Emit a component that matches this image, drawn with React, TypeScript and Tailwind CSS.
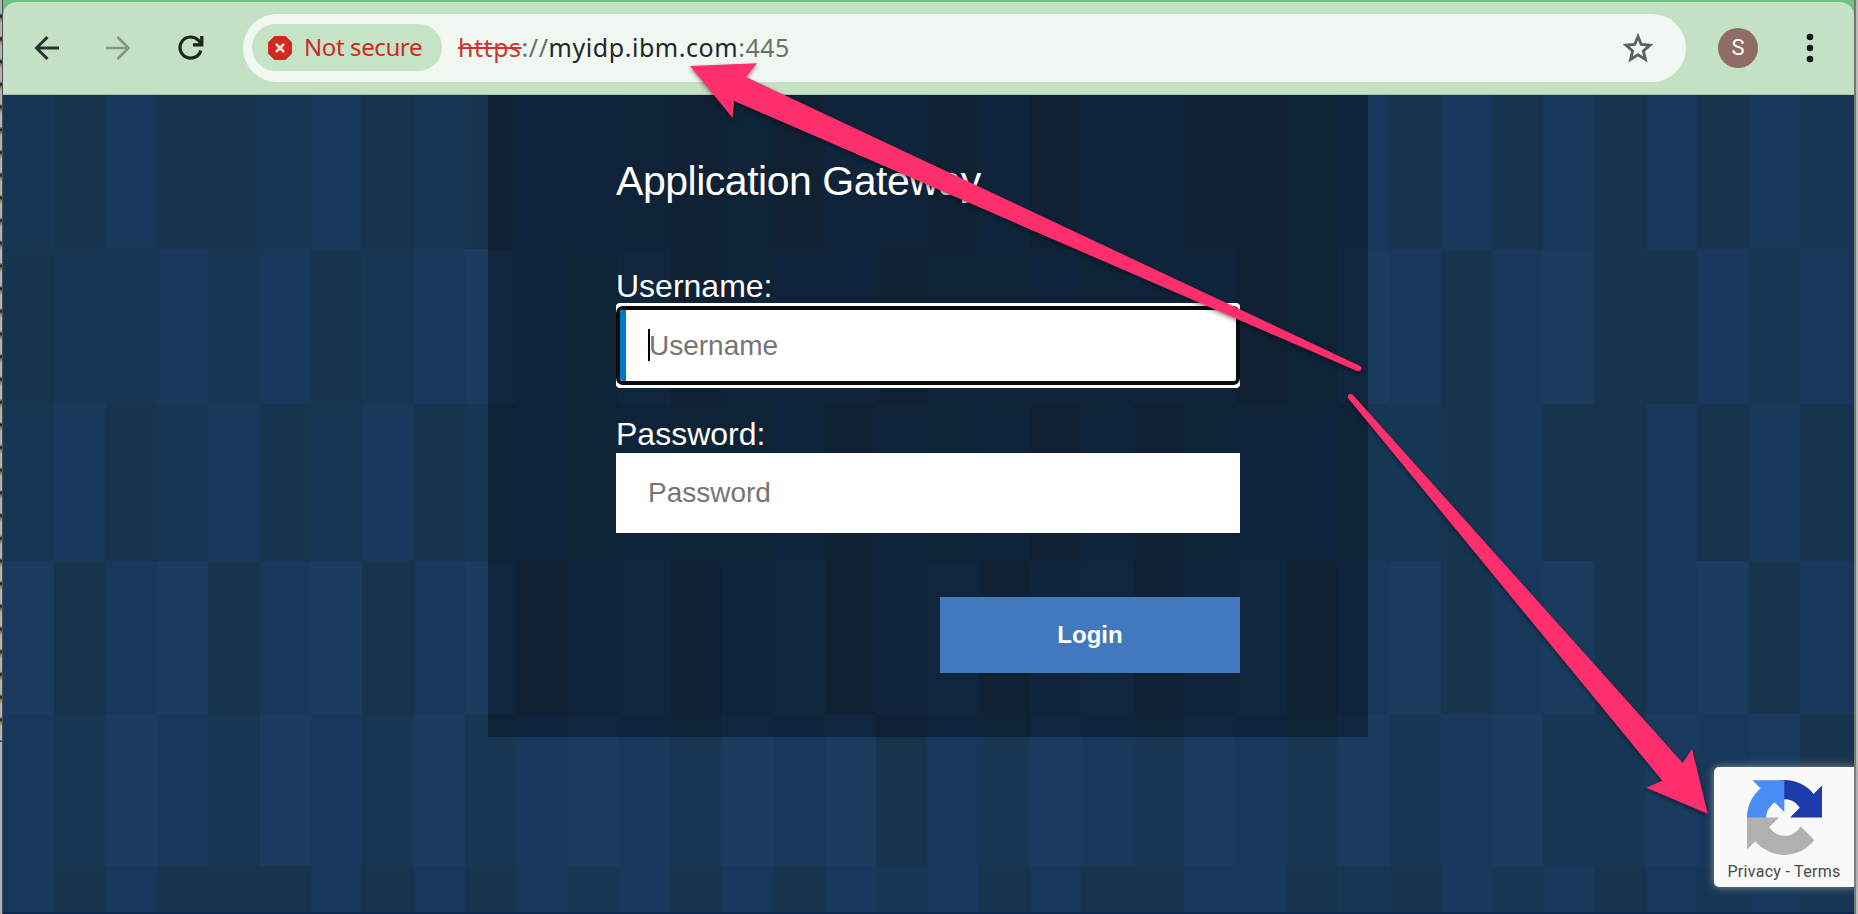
import React from "react";

const TILE_ROWS = [
  "102001201022101022020220012020202021",
  "011212012321301220112122013202300212",
  "120120120121211202120201221102002020",
  "302302302302302302302302302302302302",
  "213213213123213230213213213123113230",
  "202000202021202021202002201021202121",
];

const SHADES = ["bg-[#17344f]", "bg-[#173654]", "bg-[#17385a]", "bg-[#1a3b5d]"];

const ROW_HEIGHTS = ["h-[154px]", "h-[155px]", "h-[157px]", "h-[153px]", "h-[152px]", "h-[48px]"];

function TileBackdrop() {
  return (
    <div className="[grid-area:1/1] flex flex-col overflow-hidden">
      {TILE_ROWS.map((row, r) => (
        <div key={r} className={`flex shrink-0 ${ROW_HEIGHTS[r]}`}>
          {row.split("").map((shade, c) => (
            <div key={c} className={`w-[51.35px] shrink-0 last:grow ${SHADES[Number(shade)]}`} />
          ))}
        </div>
      ))}
    </div>
  );
}

function Toolbar() {
  return (
    <header className="h-[95px] shrink-0 bg-[#6fc184] pt-[2px]">
      <div className="flex h-[93px] items-center rounded-t-[14px] border-b border-[#a9c4ab] bg-[#c5e1c5] pb-[1px]">
        <div className="flex w-[240px] items-center">
          <svg className="ml-[31px] h-[26px] w-[26px]" viewBox="0 0 26 26" fill="none" stroke="#2c332d" strokeWidth="3">
            <path d="M25 13H3M13.5 2 2.5 13l11 11" />
          </svg>
          <svg className="ml-[45px] h-[26px] w-[26px]" viewBox="0 0 26 26" fill="none" stroke="#849985" strokeWidth="2.6">
            <path d="M1 13h22M12.500 2l11 11-11 11" />
          </svg>
          <svg className="ml-[47px] h-[26px] w-[26px]" viewBox="0 0 26 26" fill="none" stroke="#1d241e" strokeWidth="3.200">
            <path d="M22.800 15.500A10.600 10.600 0 1 1 20.500 5.500L23 8" />
            <path d="M23.800 1v8.800H15" />
          </svg>
        </div>

        <div className="flex h-[68px] w-[1443px] items-center rounded-full bg-[#f1f8f1]">
          <div className="ml-[9px] flex h-[47px] w-[190px] items-center rounded-full bg-[#c5e3c5]">
            <svg className="ml-[16px] h-[24px] w-[24px]" viewBox="0 0 24 24">
              <path d="M7 0h10l7 7v10l-7 7H7l-7-7V7z" fill="#d22a22" stroke="#d22a22" strokeLinejoin="round" />
              <path d="M8 8l8 8M16 8l-8 8" stroke="#f3dfd6" strokeWidth="2.600" />
            </svg>
            <span className="ml-[12px] whitespace-nowrap pb-[2px] font-['Noto_Sans',sans-serif] text-[24px] leading-[30px] tracking-[-0.4px] text-[#cf2a22]">
              Not secure
            </span>
          </div>
          <div className="ml-[16px] flex-1 whitespace-nowrap pb-[2px] font-['Noto_Sans',sans-serif] text-[25px] leading-[30px] tracking-[0.55px] text-[#6b706c]">
            <span className="text-[#d0362c] line-through decoration-[2px]">https</span>
            ://<span className="text-[#23262a]">myidp.ibm.com</span>:445
          </div>
          <svg className="mr-[33px] h-[30px] w-[30px]" viewBox="0 0 30 30" fill="none" stroke="#5d625e" strokeWidth="2.900">
            <path d="M15 3.500l3.300 8 8.700.7-6.600 5.700 2 8.500L15 21.800l-7.400 4.600 2-8.500L3 12.200l8.700-.7z" />
          </svg>
        </div>

        <div className="ml-[32px] flex h-[40px] w-[40px] items-center justify-center rounded-full bg-[#8f6d63] font-['Roboto',sans-serif] text-[22px] leading-none text-white">
          S
        </div>
        <svg className="ml-[47px] h-[32px] w-[10px]" viewBox="0 0 10 32" fill="#141a15">
          <circle cx="5" cy="5" r="3.300" />
          <circle cx="5" cy="16" r="3.300" />
          <circle cx="5" cy="27" r="3.300" />
        </svg>
      </div>
    </header>
  );
}

function LoginPanel() {
  const placeholder = "placeholder:text-[#757575] placeholder:opacity-100 outline-none text-[28px]";
  return (
    <form
      className="[grid-area:1/1] relative ml-[485px] h-[642px] w-[880px] bg-black/35 px-[128px] pt-[62px] font-['Liberation_Sans',Arial,sans-serif] text-white"
      onSubmit={(e) => e.preventDefault()}
    >
      <h1 className="whitespace-nowrap text-[41px] leading-[48px] tracking-[-0.47px]">Application Gateway</h1>
      <label className="mt-[64px] block text-[32px] leading-[34px]" htmlFor="user">
        Username:
      </label>
      <div className="relative h-[85px] w-[624px] rounded-[4px] bg-white py-[3px]">
        <div className="h-[79px] overflow-hidden rounded-[7px] border-[4px] border-[#0b0b0b] bg-white">
          <input
            id="user"
            placeholder="Username"
            className={`h-[71px] w-full border-l-[6px] border-[#0078c8] bg-white pl-[23px] ${placeholder}`}
          />
        </div>
        <span className="absolute left-[32px] top-[26px] h-[32px] w-[2px] bg-black" />
      </div>
      <label className="mt-[29px] block text-[32px] leading-[34px]" htmlFor="pass">
        Password:
      </label>
      <input
        id="pass"
        type="password"
        placeholder="Password"
        className={`mt-[2px] block h-[80px] w-[624px] bg-white pl-[32px] ${placeholder}`}
      />
      <button className="ml-[324px] mt-[64px] block h-[76px] w-[300px] bg-[#4178be] text-[24px] font-bold">
        Login
      </button>
    </form>
  );
}

function RecaptchaBadge() {
  return (
    <div className="absolute left-[1714px] top-[767px] flex h-[120px] w-[140px] flex-col items-center rounded-l-[5px] bg-[#f9f9f9] pt-[13px] shadow-[0_0_9px_#8a959d]">
      <svg className="h-[75px] w-[75px]" viewBox="0 0 64 64">
        <path
          fill="#1c3aa9"
          d="M64 31.955l-.033-1.370V4.687l-7.160 7.160C50.948 4.674 42.033.093 32.050.093c-10.400 0-19.622 4.960-25.458 12.640l11.736 11.860a15.550 15.550 0 0 1 4.754-5.334c2.050-1.600 4.952-2.906 8.968-2.906.485 0 .860.057 1.135.163 4.976.393 9.288 3.140 11.828 7.124l-8.307 8.307L64 31.953"
        />
        <path
          fill="#4a8df6"
          d="M31.862.094l-1.370.033H4.594l7.160 7.160C4.580 13.147 0 22.060 0 32.046c0 10.400 4.960 19.622 12.640 25.458L24.500 45.768a15.550 15.550 0 0 1-5.334-4.754c-1.600-2.050-2.906-4.952-2.906-8.968 0-.485.057-.860.163-1.135.393-4.976 3.140-9.288 7.124-11.828l8.307 8.307L31.860.095"
        />
        <path
          fill="#b1b1b1"
          d="M.001 32.045l.033 1.370v25.898l7.160-7.160c5.860 7.173 14.774 11.754 24.760 11.754 10.400 0 19.622-4.960 25.458-12.640l-11.736-11.860a15.550 15.550 0 0 1-4.754 5.334c-2.050 1.600-4.952 2.906-8.968 2.906-.485 0-.860-.057-1.135-.163-4.976-.393-9.288-3.140-11.828-7.124l8.307-8.307c-10.522.040-22.400.066-27.295-.005"
        />
      </svg>
      <div className="mt-[7px] whitespace-nowrap font-['Roboto',sans-serif] text-[16px] leading-[20px] tracking-[0.3px] text-[#4a4a4a]">
        Privacy - Terms
      </div>
    </div>
  );
}

function Arrows() {
  return (
    <svg
      className="pointer-events-none absolute left-0 top-0 h-[914px] w-[1858px] drop-shadow-[0_2px_2px_rgba(0,0,0,0.45)]"
      viewBox="0 0 1858 914"
      fill="#ff2f6d"
    >
      <path d="M690 66L757 63.300L746 77L1360 366Q1362.500 368 1360.500 370.500Q1359 371.800 1357 371L734 101L732.700 118z" />
      <path d="M1707.700 813.700L1646.300 787.700L1662.300 780.700L1348 398Q1347 395 1349.500 394Q1351.500 393.500 1353 395L1682.700 763L1692 749z" />
    </svg>
  );
}

export default function App() {
  return (
    <div className="relative flex h-[914px] w-[1858px] overflow-hidden">
      <div className="w-[3px] shrink-0 border-r border-[#3c5364] bg-[repeating-linear-gradient(180deg,#b9b2ab_0px,#b9b2ab_13px,#1d1512_16px,#a5713f_19px,#b9b2ab_22.700px)]">
        <div className="mt-[742px] h-[172px] bg-[#aeaeaa]" />
      </div>
      <div className="flex w-[1851px] shrink-0 flex-col">
        <Toolbar />
        <main className="grid h-[819px] grid-cols-1 grid-rows-1 items-start overflow-hidden border-b-2 border-[#0c2a50]">
          <TileBackdrop />
          <LoginPanel />
        </main>
      </div>
      <div className="flex-1 border-l-2 border-[#747674] bg-[#b9bab9]" />
      <RecaptchaBadge />
      <Arrows />
    </div>
  );
}
